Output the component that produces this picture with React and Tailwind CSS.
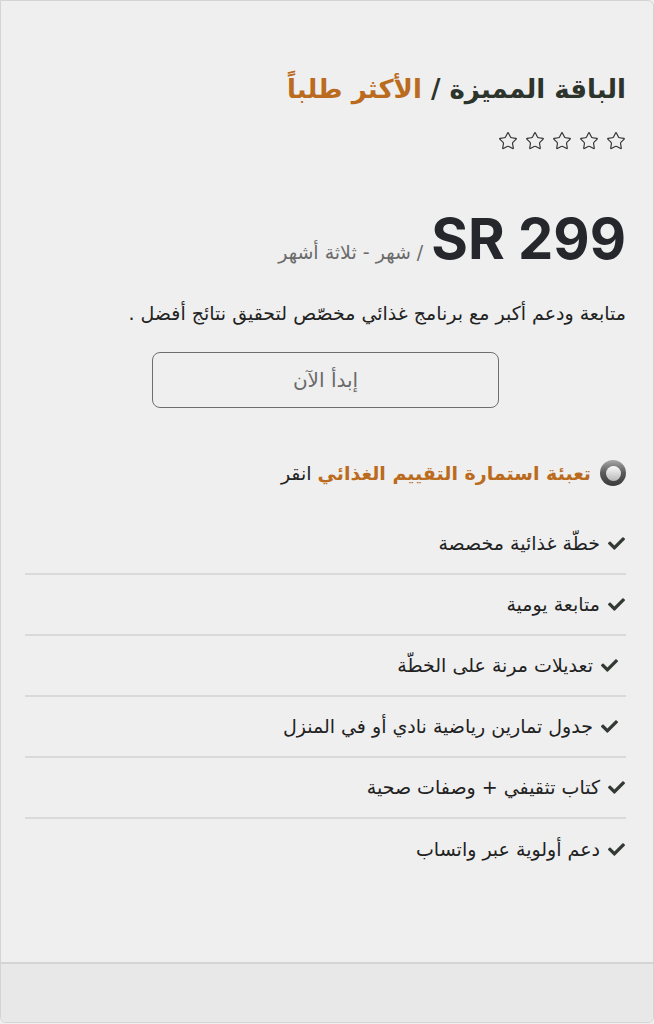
import React from 'react';
import { Star } from 'lucide-react';
import { FaCheck } from 'react-icons/fa';

const arabic = { fontFamily: '"DejaVu Sans", "Noto Sans", sans-serif' };

// shifted: a few rows in the source have a leading space before the icon
const features = [
  { text: 'خطّة غذائية مخصصة' },
  { text: 'متابعة يومية' },
  { text: 'تعديلات مرنة على الخطّة', shifted: true },
  { text: 'جدول تمارين رياضية نادي أو في المنزل', shifted: true },
  { text: 'كتاب تثقيفي + وصفات صحية' },
  { text: 'دعم أولوية عبر واتساب' },
];

const RadioIcon = () => (
  <span className="flex h-[26px] w-[26px] shrink-0 items-center justify-center rounded-full bg-gradient-to-b from-[#a8a8a8] via-[#5a5a5a] to-[#3a3a3a]">
    <span className="h-[15px] w-[15px] rounded-full bg-gradient-to-b from-[#fafafa] to-[#b8b8b8]" />
  </span>
);

export default function App() {
  return (
    <div dir="rtl" className="min-h-[1024px] w-full bg-[#efefef]" style={arabic}>
      <div className="flex min-h-[1023px] flex-col rounded-b-md rounded-tr-md border border-[#d4d4d4] bg-[#efefef]">
        {/* Main content */}
        <div className="flex-1 pl-6 pr-[27px] pt-[70px]">
          <h2 className="text-[26px] font-bold leading-[36px] text-[#2c342c]">
            الباقة المميزة / <span className="text-[#bb6b1d]">الأكثر طلباً</span>
          </h2>

          <div className="mt-6 flex h-5 items-center gap-[7px]">
            {[0, 1, 2, 3, 4].map((i) => (
              <Star key={i} size={20} strokeWidth={1.4} className="text-[#333]" />
            ))}
          </div>

          <div className="mt-[56px] flex h-16 items-baseline gap-2">
            <span
              dir="ltr"
              className="text-[56px] font-bold leading-[64px] text-[#25272c]"
              style={{ fontFamily: 'Inter, "Liberation Sans", sans-serif' }}
            >
              SR 299
            </span>
            <span className="text-[19px] text-[#6b6b6b]">/ شهر - ثلاثة أشهر</span>
          </div>

          <p className="mt-7 text-[19px] leading-[28px] text-[#222]">
            متابعة ودعم أكبر مع برنامج غذائي مخصّص لتحقيق نتائج أفضل .
          </p>

          <button className="mx-auto mt-[25px] flex h-[56px] w-[347px] items-center justify-center rounded-lg border border-[#6e6e6e] text-[20px] text-[#6a6a6a]">
            إبدأ الآن
          </button>

          <div className="mt-[51px] flex h-7 items-center gap-[9px]">
            <RadioIcon />
            <span className="text-[19px] leading-7 text-[#222]">
              <span className="font-bold text-[#bb6b1d]">تعبئة استمارة التقييم الغذائي</span> انقر
            </span>
          </div>

          <ul className="mt-[27px]">
            {features.map((f, i) => (
              <li
                key={f.text}
                className={`flex h-[61px] items-center gap-[8px] ${
                  i < features.length - 1 ? 'border-b-2 border-[#d9d9d9]' : ''
                }`}
              >
                <FaCheck
                  size={17}
                  className={`shrink-0 text-[#333a33] ${f.shifted ? 'mr-[8px]' : 'mr-[1px]'}`}
                />
                <span className="text-[19px] text-[#222]">{f.text}</span>
              </li>
            ))}
          </ul>
        </div>

        {/* Footer */}
        <div className="h-[60px] rounded-b-md border-t-2 border-[#d4d4d4] bg-[#e8e8e8]" />
      </div>
    </div>
  );
}
